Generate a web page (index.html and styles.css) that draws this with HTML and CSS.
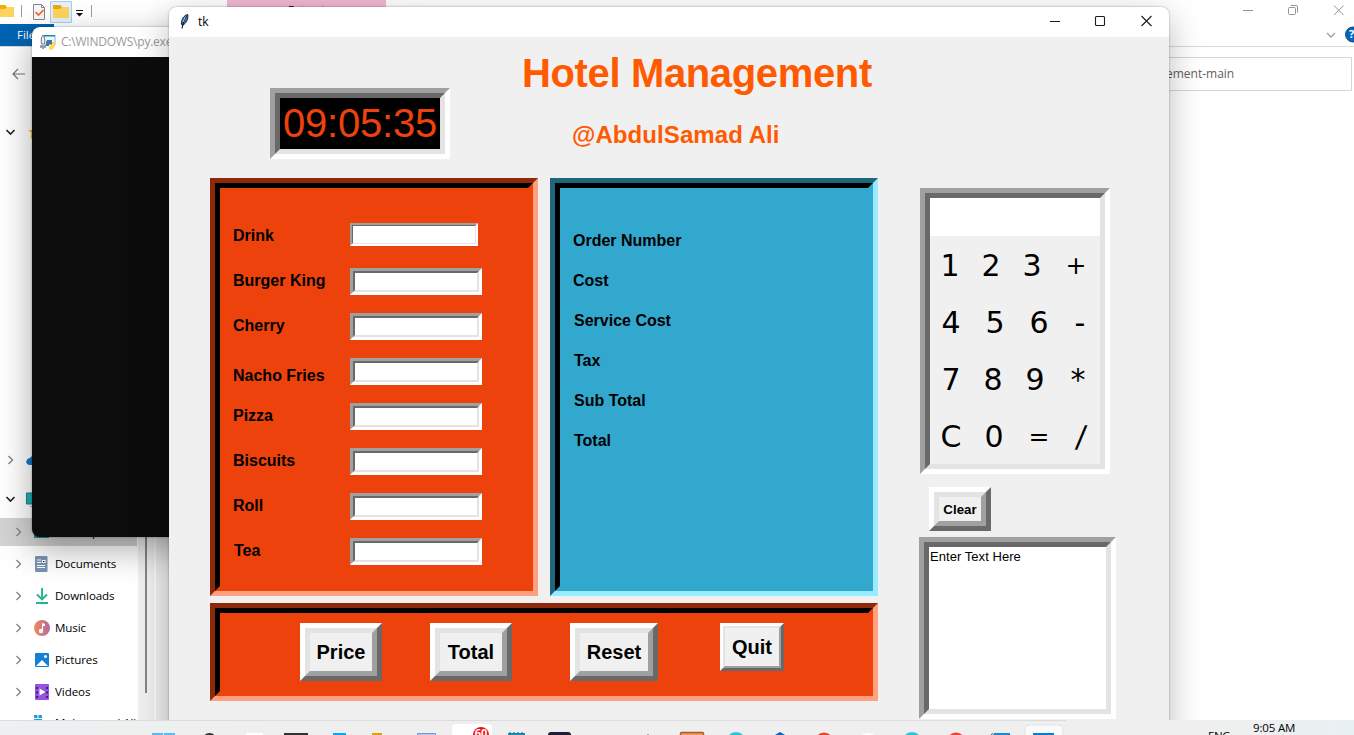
FILE: index.html
```html
<!DOCTYPE html>
<html lang="en">
<head>
<meta charset="utf-8">
<title>tk</title>
<link rel="stylesheet" href="styles.css">
</head>
<body>
<div class="desktop">
  <section class="explorer">
    <header class="ex-title">
      <svg class="ex-quick" width="100" height="24" viewBox="0 0 100 24">
        <path d="M-3 5h8l2 2h7v10h-17z" fill="#ffd35c"/><path d="M-3 5h8l2 2-2 2h-8z" fill="#f0ad0c"/>
        <path d="M21.5 5v12M91.5 5v12" stroke="#9b9b9b"/>
        <path d="M33.500 4.500h8l3 3v12h-11z" fill="#f6f6f6" stroke="#858585"/><path d="M41.500 4.500v3h3" fill="none" stroke="#858585"/><path d="M35.500 12l3 3 5-5" fill="none" stroke="#f2622a" stroke-width="1.700"/>
        <path d="M50.500 1.500h21v21h-21z" fill="#e4f1fd" stroke="#a5cdf4"/>
        <path d="M53 5h7l2 2h7v11h-16z" fill="#ffd35c"/><path d="M53 5h7l2 2-2 2h-7z" fill="#eda90a"/>
        <path d="M76 10h7v1h-7zM76 13h7l-3.500 3.500z" fill="#111"/>
      </svg>
      <span class="ex-context">Extract</span>
      <svg class="ex-controls" width="104" height="20" viewBox="0 0 104 20" fill="none" stroke="#959595">
        <path d="M0 10.500h10M91 5.500l9.500 9.500m0-9.500l-9.500 9.500"/><rect x="45.500" y="7.500" width="7" height="7" rx="1"/><path d="M47.500 5.500h5.500a1.500 1.500 0 0 1 1.500 1.500v5.500"/>
      </svg>
    </header>
    <div class="ex-ribbon">
      <span class="ex-file">File</span>
      <svg width="28" height="23" viewBox="0 0 28 23"><path d="M1 9l4 4 4-4" fill="none" stroke="#a0a0a0" stroke-width="1.300"/><circle cx="27" cy="10.500" r="7.500" fill="#0067c0" stroke="#174a78"/></svg>
      <span class="ex-help">?</span>
    </div>
    <div class="ex-bar">
      <svg width="14" height="14" viewBox="0 0 14 14" fill="none" stroke="#777" stroke-width="1.200"><path d="M13 7H1M6 2L1 7l5 5"/></svg>
      <div class="ex-address">Hotel-Management-main</div>
    </div>
    <div class="ex-main">
      <nav class="nav">
        <div class="nav-row nav-root nav-quick">
          <svg width="34" height="16" viewBox="0 0 34 16"><path d="M1.500 6l4 4 4-4" fill="none" stroke="#222" stroke-width="1.600"/><path d="M27.500 1l2 5h5l-4 3 2 5-5-3-4 4 1-6-3-3h4z" transform="translate(2 0)" fill="#f4b70e"/></svg>
        </div>
        <div class="nav-row nav-root nav-cloud">
          <svg width="34" height="16" viewBox="0 0 34 16"><path d="M3.500 4l4 4-4 4" fill="none" stroke="#8a8a8a" stroke-width="1.500"/><path d="M30 3c-3 0-4 2-5 3-5 1-5 7 0 7h9V3z" fill="#1474ca"/></svg>
        </div>
        <div class="nav-row nav-root nav-pc">
          <svg width="34" height="16" viewBox="0 0 34 16"><path d="M1.500 6l4 4 4-4" fill="none" stroke="#222" stroke-width="1.600"/><path d="M21.500 2h12v11h-12z" fill="#24afb8" stroke="#137f93"/><path d="M25 15.500h9" stroke="#aaa"/></svg>
        </div>
        <div class="nav-row nav-current"><svg class="chev" width="8" height="12" viewBox="0 0 8 12"><path d="M1.500 2l4 4-4 4"/></svg><svg width="16" height="16" viewBox="0 0 16 16"><path d="M0 2h15v12H0z" fill="#1689aa"/></svg><span>Desktop</span></div>
        <div class="nav-row"><svg class="chev" width="8" height="12" viewBox="0 0 8 12"><path d="M1.500 2l4 4-4 4"/></svg><svg width="16" height="16" viewBox="0 0 16 16"><rect x="1" width="12.500" height="16" rx="1" fill="#7894b2"/><path d="M3 4h4M3 6.500h4M3 9.500h8M3 11.500h8M8.500 4.500h2.500v2h-2.500z" stroke="#fff" stroke-width="1.200"/></svg><span>Documents</span></div>
        <div class="nav-row"><svg class="chev" width="8" height="12" viewBox="0 0 8 12"><path d="M1.500 2l4 4-4 4"/></svg><svg width="16" height="16" viewBox="0 0 16 16" fill="none" stroke="#20b58e" stroke-width="1.900"><path d="M8 0v11M3 6.500L8 11.500 13 6.500M2 15h12"/></svg><span>Downloads</span></div>
        <div class="nav-row"><svg class="chev" width="8" height="12" viewBox="0 0 8 12"><path d="M1.500 2l4 4-4 4"/></svg><svg width="16" height="16" viewBox="0 0 16 16"><defs><linearGradient id="m"><stop stop-color="#f18a58"/><stop offset="1" stop-color="#b468a4"/></linearGradient></defs><circle cx="8" cy="8" r="8" fill="url(#m)"/><path d="M8.500 11V3.500l2 .7v1.500l-2-.7" fill="#fff" stroke="#fff"/><circle cx="7" cy="11" r="2.200" fill="#fff"/></svg><span>Music</span></div>
        <div class="nav-row"><svg class="chev" width="8" height="12" viewBox="0 0 8 12"><path d="M1.500 2l4 4-4 4"/></svg><svg width="16" height="16" viewBox="0 0 16 16"><rect x="1" y="1" width="14" height="14" rx="1" fill="#1482d4"/><path d="M2 14l6-6 6 6z" fill="#fff"/><circle cx="11.500" cy="4.500" r="1.500" fill="#fff"/></svg><span>Pictures</span></div>
        <div class="nav-row"><svg class="chev" width="8" height="12" viewBox="0 0 8 12"><path d="M1.500 2l4 4-4 4"/></svg><svg width="16" height="16" viewBox="0 0 16 16"><rect x="1" width="14" height="16" rx="1" fill="#9752e2"/><path d="M5.500 4.500v7l6-3.500z" fill="#fff"/><path d="M3 3v11M13 3v11" stroke="#42217a" stroke-width="2" stroke-dasharray="2 2.500"/></svg><span>Videos</span></div>
        <div class="nav-row nav-last"><svg class="chev" width="8" height="12" viewBox="0 0 8 12"></svg><svg width="16" height="16" viewBox="0 0 16 16"><path d="M0 0h3.500v3H0zM4.500 0H8v3H4.500zM0 4h8v4H0z" fill="#1c9fe0"/></svg><span>Muhammad Ali</span></div>
      </nav>
      <div class="nav-scroll"><div class="nav-thumb"></div></div>
    </div>
  </section>

  <section class="console">
    <header class="console-title">
      <svg width="16" height="16" viewBox="0 0 16 16"><path d="M4 1.500h11v9H5" fill="#f3f7fa" stroke="#9ab"/><path d="M4 1h11v1.500H4z" fill="#0a84d8"/><path d="M3 1c2 2 2 6 1.500 9H1.500C1 7 1 3 3 1z" fill="#eee" stroke="#555" stroke-width=".8"/><path d="M1 11v3M3 11v4M5 11v3" stroke="#247" /><path d="M7 6h5v4H9v2H6V8z" fill="#3b79a9"/><path d="M12 8h2.500v5l-2 2.500H9V12l3-1z" fill="#ffda45"/></svg>
      <span>C:\WINDOWS\py.exe</span>
    </header>
  </section>

  <section class="tk">
    <header class="tk-title">
      <svg width="12" height="17" viewBox="0 0 12 17"><path d="M8.800 1.500C5 2 2 7 2.500 11.500l1 1C7 10.500 9.500 6 8.800 1.500z" fill="#3c78bd" stroke="#16202c"/><path d="M7.500 3C5.500 6 3.800 11 3 15.500" fill="none" stroke="#111" stroke-width="1.100"/><path d="M6.500 3.500L4 9" stroke="#a7cff2"/></svg>
      <span class="tk-name">tk</span>
      <svg class="tk-controls" width="104" height="12" viewBox="0 0 104 12" fill="none" stroke="#1b1b1b" stroke-width="1.100"><path d="M0 6.500h10M91.500 1l10 10m0-10l-10 10"/><rect x="45.500" y="1.500" width="9" height="9" rx="1"/></svg>
    </header>
    <div class="tk-body">
      <main class="left">
        <div class="heading">
          <div class="sunken clock"><div>09:05:35</div></div>
          <div class="titles"><h1>Hotel Management</h1><h2>@AbdulSamad Ali</h2></div>
        </div>
        <div class="panels">
          <div class="panel orange"><div class="face menu">
            <div class="item"><label>Drink</label><div class="sunken entry first"><div></div></div></div>
            <div class="item"><label>Burger King</label><div class="sunken entry"><div></div></div></div>
            <div class="item"><label>Cherry</label><div class="sunken entry"><div></div></div></div>
            <div class="item"><label class="low">Nacho Fries</label><div class="sunken entry"><div></div></div></div>
            <div class="item"><label>Pizza</label><div class="sunken entry"><div></div></div></div>
            <div class="item"><label>Biscuits</label><div class="sunken entry"><div></div></div></div>
            <div class="item"><label>Roll</label><div class="sunken entry"><div></div></div></div>
            <div class="item"><label class="indent">Tea</label><div class="sunken entry"><div></div></div></div>
          </div></div>
          <div class="panel blue"><div class="face bill">
            <div>Order Number</div><div>Cost</div><div class="indent">Service Cost</div><div class="indent">Tax</div><div class="indent">Sub Total</div><div class="indent">Total</div>
          </div></div>
        </div>
        <div class="panel orange actions"><div class="face">
          <div class="raised price"><div>Price</div></div>
          <div class="raised total"><div>Total</div></div>
          <div class="raised reset"><div>Reset</div></div>
          <div class="raised quit"><div>Quit</div></div>
        </div></div>
      </main>
      <aside class="right">
        <div class="sunken calc"><div>
          <div class="display"></div>
          <div class="keys k1"><span>1</span><span>2</span><span>3</span><span class="op">+</span></div>
          <div class="keys k2"><span>4</span><span>5</span><span>6</span><span>-</span></div>
          <div class="keys k3"><span>7</span><span>8</span><span>9</span><span>*</span></div>
          <div class="keys k4"><span>C</span><span>0</span><span class="op">=</span><span class="slash">/</span></div>
        </div></div>
        <div class="raised clear"><div>Clear</div></div>
        <div class="sunken note"><div>Enter Text Here</div></div>
      </aside>
    </div>
  </section>

  <footer class="taskbar">
    <svg class="apps" width="1200" height="15" viewBox="0 0 1200 15">
      <path d="M0 .5h1066" stroke="#dcdcdc"/>
      <path d="M152 13h11v2h-11zM164 13h11v2h-11z" fill="#55bdf0"/>
      <circle cx="209.500" cy="20" r="7" fill="#333"/>
      <path d="M246 13h17v2h-17z" fill="#fff"/><path d="M284 13h24v2h-24z" fill="#333"/>
      <path d="M333 13h13v2h-13z" fill="#0ba5f5"/><path d="M372 13h10v2h-10z" fill="#dda00c"/>
      <path d="M417.500 15v-1.500h18V15" fill="#b7c8ee" stroke="#7b97d1"/>
      <rect x="452" y="4" width="40" height="16" rx="4" fill="#fff"/><circle cx="481" cy="15" r="8" fill="#ee1111"/>
      <path d="M508 13h17v2h-17z" fill="#1b8db1"/><path d="M510 12v2m4-2v2m4-2v2m4-2v2" stroke="#155a78"/>
      <rect x="548" y="12" width="23" height="10" rx="3" fill="#1e1e34"/><circle cx="648" cy="15" r="1" fill="#888"/>
      <rect x="680.500" y="12.500" width="23" height="10" rx="1" fill="#f1985c" stroke="#ad5c25" stroke-width="1.500"/>
      <circle cx="736" cy="22" r="10" fill="#2fc5d7"/><path d="M775 15l5-3 5 3z" fill="#0961bb"/>
      <circle cx="824" cy="22" r="9.500" fill="#ea4335"/><circle cx="868" cy="22" r="9" fill="#fff"/>
      <circle cx="912" cy="22" r="10" fill="#2fc5d7"/><circle cx="956" cy="22" r="9.500" fill="#ea4335"/>
      <path d="M994 13h16v2h-16z" fill="#188bd4"/><path d="M991 15q1-3 3 0" fill="none" stroke="#666"/>
      <rect x="1025" y="5" width="38" height="16" rx="4" fill="#fafafa" stroke="#e3e3e3"/><path d="M1033 13h21v2h-21z" fill="#0b7dd1"/>
    </svg>
    <span class="badge">60</span>
    <span class="lang">ENG</span>
    <span class="time">9:05 AM</span>
  </footer>
</div>
</body>
</html>
```
FILE: styles.css
```css
* { box-sizing: border-box; }
body { margin: 0; overflow: hidden; font: 12px "Open Sans", "Noto Sans", sans-serif; color: #000; }
svg { display: block; flex: none; }
.desktop { position: relative; width: 1354px; height: 735px; overflow: hidden; background: #fff; }

/* file explorer */
.explorer { height: 720px; background: #fff; }
.ex-title { display: flex; height: 24px; }
.ex-context { width: 159px; height: 24px; margin-left: 127px; padding-top: 2px; background: #f1b8d2; text-align: center; line-height: 16px; font-size: 11.5px; }
.ex-controls { margin: 0 7px 0 auto; }
.ex-ribbon { display: flex; align-items: flex-start; height: 23px; border-bottom: 1px solid #d9d9d9; position: relative; }
.ex-file { width: 54px; height: 22px; margin-right: auto; padding-left: 17px; background: #0063b1; color: #fff; font-size: 11.5px; line-height: 22px; }
.ex-help { position: absolute; left: 1349px; top: 2px; color: #fff; font-size: 11px; font-weight: 700; line-height: 16px; }
.ex-bar { display: flex; align-items: center; height: 54px; padding: 0 2px 0 12px; }
.ex-address { width: 1000px; height: 34px; margin-left: auto; padding-left: 741px; border: 1px solid #d5d5d5; line-height: 32px; font-size: 12px; color: #5f5f5f; }
.ex-main { display: flex; height: 619px; overflow: hidden; }
.nav { width: 138px; display: flex; flex-direction: column; overflow: hidden; }
.nav-row { display: flex; align-items: center; height: 32px; padding-left: 15px; flex: none; font-size: 11.6px; white-space: nowrap; }
.nav-row span { margin-left: 5px; padding-bottom: 2px; letter-spacing: -.1px; }
.nav-row .chev { margin-right: 11px; fill: none; stroke: #858585; stroke-width: 1.4; }
.nav-root { padding-left: 5px; height: 28px; }
.nav-quick { margin-top: 17px; }
.nav-cloud { margin-top: 300px; }
.nav-pc { margin-top: 11px; }
.nav-current { width: 137px; height: 28px; margin: 5px 0 2px; background: #d3d3d3; }
.nav-last { margin-top: -1px; }
.nav-scroll { width: 31px; background: linear-gradient(90deg, #f0f0f0 16px, #fafafa 16px, #fafafa 18px, #eee 18px); padding-left: 7px; }
.nav-thumb { width: 2px; height: 592px; background: #868686; }

/* console */
.console { position: absolute; left: 32px; top: 27px; width: 400px; height: 510px; border-radius: 8px; overflow: hidden; background: #0c0c0c; box-shadow: 0 12px 34px rgba(0,0,0,.34), 0 0 2px rgba(0,0,0,.4); }
.console-title { display: flex; align-items: center; gap: 5px; height: 30px; padding-left: 8px; background: #fff; color: #999; font-size: 12px; letter-spacing: -.22px; }
.console-title span { padding-bottom: 1px; }

/* tk window */
.tk { position: absolute; left: 169px; top: 7px; width: 1000px; height: 760px; border-radius: 8px; background: #f0f0f0; box-shadow: 0 10px 34px rgba(0,0,0,.27), 0 0 2px rgba(0,0,0,.4); font-family: "Liberation Sans", Arial, sans-serif; }
.tk-title { display: flex; align-items: center; height: 30px; padding: 0 15px 2px 10px; background: #fff; border-radius: 8px 8px 0 0; }
.tk-name { margin-left: 7px; font: 12px "Open Sans", sans-serif; }
.tk-controls { margin-left: auto; }
.tk-body { display: flex; gap: 41px; padding-left: 41px; }
.left { width: 668px; }
.heading { display: flex; height: 141px; padding-left: 60px; }

/* double bevel frames */
.sunken { border: 5px solid; border-color: #a0a0a0 #fff #fff #a0a0a0; }
.sunken > div { height: 100%; border: 5px solid; border-color: #696969 #e3e3e3 #e3e3e3 #696969; background: #fff; }
.raised { border: 5px solid; border-color: #fff #696969 #696969 #fff; background: #f0f0f0; }
.raised > div { display: flex; align-items: center; justify-content: center; height: 100%; border: 5px solid; border-color: #e3e3e3 #a0a0a0 #a0a0a0 #e3e3e3; font-weight: 700; font-size: 20px; }

.clock { width: 180px; height: 71px; margin-top: 51px; }
.clock > div { background: #000; color: #ee420c; font-size: 40px; line-height: 51px; text-align: center; letter-spacing: -.2px; }
.titles { margin-left: 72px; padding-top: 13px; color: #ff5a00; }
h1 { margin: 0; font-size: 40px; line-height: 46px; letter-spacing: -.36px; }
h2 { margin: 25px 0 0 50px; font-size: 24px; line-height: 28px; letter-spacing: .07px; }

.panels { display: flex; gap: 12px; height: 418px; margin-bottom: 7px; }
.panel { border: 5px solid; }
.panels .panel { width: 328px; }
.face { height: 100%; border: 5px solid; }
.orange { border-color: #8e280b #ffa080 #ffa080 #8e280b; }
.orange > .face { background: #ee420c; border-color: #000 #ee420c #ee420c #000; }
.blue { border-color: #1f657c #99ecff #99ecff #1f657c; }
.blue > .face { background: #33a8cf; border-color: #000 #33a8cf #33a8cf #000; }
.menu { padding: 35px 0 0 13px; font-weight: 700; font-size: 16px; }
.item { display: flex; align-items: flex-start; height: 45px; }
.item label { width: 117px; line-height: 26px; }
.item .low { margin-top: 5px; }
.item .indent { padding-left: 1px; }
.entry { width: 132px; height: 27px; border-width: 3px; }
.entry > div { border-width: 2px; }
.entry.first { width: 128px; height: 23px; border-width: 2px; }
.entry.first > div { border-width: 1px; }
.bill { padding: 33px 0 0 13px; font-weight: 700; font-size: 16px; line-height: 40px; }
.bill .indent { padding-left: 1px; }

.actions { height: 98px; }
.actions .face { display: flex; align-items: flex-start; padding: 10px 0 0 80px; }
.price { width: 82px; height: 58px; }
.total { width: 82px; height: 58px; margin-left: 48px; }
.reset { width: 88px; height: 58px; margin-left: 58px; }
.quit { width: 64px; height: 48px; margin-left: 62px; border-width: 3px; }
.quit > div { border-width: 2px; }

.right { width: 197px; padding-top: 151px; }
.calc { width: 190px; height: 286px; margin-left: 1px; }
.calc > div { background: #f0f0f0; }
.display { height: 38px; background: #fff; }
.keys { display: grid; height: 57px; line-height: 60px; text-align: center; font-family: "DejaVu Sans", sans-serif; font-size: 30px; }
.keys .op { font-size: 25px; line-height: 59px; }
.keys .slash { transform: skewX(-6deg); }
.k1 { grid-template-columns: 40px 42px 40px 48px; }
.k2 { grid-template-columns: 42px 46px 42px 40px; }
.k3 { grid-template-columns: 42px 42px 42px 44px; }
.k4 { grid-template-columns: 42px 44px 46px 38px; }
.clear { width: 62px; height: 44px; margin: 13px 0 6px 10px; }
.clear > div { font-size: 13.3px; }
.note { width: 197px; height: 182px; }
.note > div { padding: 2px 0 0 1px; font-size: 13px; line-height: 15px; letter-spacing: .05px; }

/* taskbar */
.taskbar { position: absolute; left: 0; top: 720px; width: 1354px; height: 15px; overflow: hidden; background: linear-gradient(90deg, #eef0f1, #efefef 20%, #efefef 90%, #e9f0f4); }
.badge { position: absolute; left: 474px; top: 6px; width: 14px; color: #fff; font: 700 11px/14px "Open Sans", sans-serif; text-align: center; }
.lang { position: absolute; left: 1208px; top: 8px; font-size: 11.5px; line-height: 16px; letter-spacing: -.4px; }
.time { position: absolute; left: 1253px; top: 0; font-size: 11.5px; line-height: 16px; letter-spacing: -.15px; }
```
